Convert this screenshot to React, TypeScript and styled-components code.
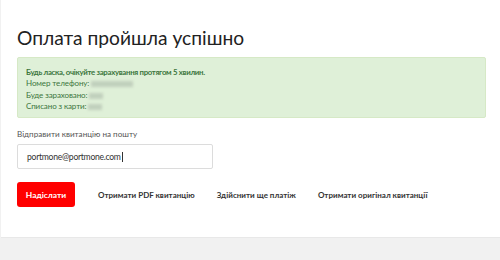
import styled, { createGlobalStyle } from 'styled-components';

const GlobalStyle = createGlobalStyle`
  html, body {
    margin: 0;
    padding: 0;
    background: #f1f1f1;
    font-family: Lato, "Open Sans", "Liberation Sans", sans-serif;
  }
`;

const Page = styled.div`
  width: 500px;
  height: 260px;
  overflow: hidden;
  background: #f1f1f1;
  padding-left: 1px;
  box-sizing: border-box;
`;

const Card = styled.main`
  background: #fff;
  height: 238px;
  box-sizing: border-box;
  padding: 26.5px 14px 0 16px;
  border-bottom: 1px solid #e8e8e8;
`;

const Title = styled.h1`
  margin: 0 0 8.5px;
  font-size: 19.2px;
  line-height: 22px;
  font-weight: 400;
  color: #222;
`;

const Alert = styled.div`
  background: #dff0d8;
  border: 1px solid #d6e9c6;
  border-radius: 2px;
  padding: 8.5px 8px 4.5px;
  color: #3c763d;
  font-size: 8px;
  line-height: 11.5px;
  letter-spacing: -0.1px;
`;

const AlertLead = styled.div`
  font-size: 7.8px;
  font-weight: 700;
  letter-spacing: -0.3px;
`;

const Hidden = styled.span<{ $w: number }>`
  display: inline-block;
  width: ${(p) => p.$w}px;
  height: 6px;
  margin-left: 2px;
  vertical-align: -1px;
  background: #b9c7b6;
  filter: blur(1.5px);
  opacity: 0.8;
`;

const Label = styled.label`
  display: block;
  margin: 10px 0 4px;
  font-size: 8.1px;
  line-height: 12px;
  color: #555;
`;

const Input = styled.div`
  width: 196px;
  height: 25px;
  box-sizing: border-box;
  border: 1px solid #dcdcdc;
  border-radius: 2px;
  padding: 0 9px;
  display: flex;
  align-items: center;
  font-size: 8.6px;
  letter-spacing: -0.28px;
  color: #333;
`;

const Caret = styled.span`
  display: inline-block;
  width: 1px;
  height: 10px;
  background: #333;
  margin-left: 1px;
`;

const Actions = styled.div`
  display: flex;
  align-items: center;
  gap: 22px;
  margin-top: 13px;
`;

const SendButton = styled.button`
  width: 58px;
  height: 25px;
  border: none;
  border-radius: 3px;
  background: #ff0000;
  color: #fff;
  font-family: inherit;
  font-size: 8.4px;
  font-weight: 700;
  padding: 0;
  margin-right: 1px;
`;

const LinkButton = styled.a`
  font-size: 8px;
  font-weight: 700;
  color: #333;
  text-decoration: none;
`;

export default function App() {
  return (
    <>
      <GlobalStyle />
      <Page>
        <Card>
          <Title>Оплата пройшла успішно</Title>
          <Alert>
            <AlertLead>Будь ласка, очікуйте зарахування протягом 5 хвилин.</AlertLead>
            <div>Номер телефону:<Hidden $w={42} /></div>
            <div>Буде зараховано:<Hidden $w={14} /></div>
            <div>Списано з карти:<Hidden $w={14} /></div>
          </Alert>
          <Label>Відправити квитанцію на пошту</Label>
          <Input>
            portmone@portmone.com
            <Caret />
          </Input>
          <Actions>
            <SendButton>Надіслати</SendButton>
            <LinkButton>Отримати PDF квитанцію</LinkButton>
            <LinkButton>Здійснити ще платіж</LinkButton>
            <LinkButton>Отримати оригінал квитанції</LinkButton>
          </Actions>
        </Card>
      </Page>
    </>
  );
}
